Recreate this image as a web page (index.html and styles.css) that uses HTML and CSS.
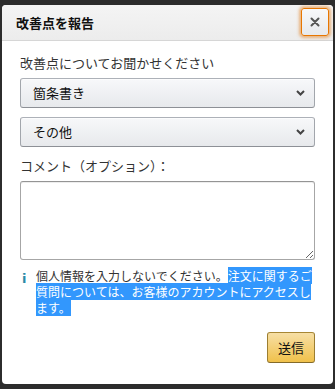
FILE: index.html
```html
<!DOCTYPE html>
<html lang="ja">
<head>
<meta charset="utf-8">
<link rel="stylesheet" href="styles.css">
</head>
<body>
<div class="modal">
  <div class="modal-header">
    <h1 class="modal-title">改善点を報告</h1>
    <button class="close-btn" aria-label="閉じる">
      <svg width="10" height="10" viewBox="0 0 10 10"><path d="M1.5 1.5 L8.5 8.5 M8.5 1.5 L1.5 8.5" stroke="#555" stroke-width="2" stroke-linecap="round" fill="none"/></svg>
    </button>
  </div>
  <div class="modal-body">
    <label class="field-label">改善点についてお聞かせください</label>
    <div class="select">
      <span class="select-text">箇条書き</span>
      <svg class="chev" width="9" height="6" viewBox="0 0 9 6"><path d="M1 1 L4.5 4.5 L8 1" stroke="#444" stroke-width="2" fill="none"/></svg>
    </div>
    <div class="select second">
      <span class="select-text">その他</span>
      <svg class="chev" width="9" height="6" viewBox="0 0 9 6"><path d="M1 1 L4.5 4.5 L8 1" stroke="#444" stroke-width="2" fill="none"/></svg>
    </div>
    <label class="field-label comment-label">コメント（オプション）：</label>
    <textarea class="comment"></textarea>
    <div class="info">
      <span class="info-icon">i</span>
      <p class="info-text">個人情報を入力しないでください。<span class="sel">注文に関するご</span><span class="sel">質問については、お客様のアカウントにアクセスし</span><span class="sel">ます。</span></p>
    </div>
    <div class="actions">
      <button class="submit">送信</button>
    </div>
  </div>
</div>
</body>
</html>
```
FILE: styles.css
```css
html, body {
  margin: 0;
  padding: 0;
}
body {
  background: #2c2c2c;
  font-family: "Noto Sans CJK JP", "Noto Sans", sans-serif;
  color: #333;
  padding: 5px 2px 5px 2px;
  height: 389px;
  box-sizing: border-box;
}
.modal {
  background: #fff;
  border-radius: 4px;
  height: 379px;
  overflow: hidden;
  box-sizing: border-box;
  display: flex;
  flex-direction: column;
}
.modal-header {
  height: 36px;
  box-sizing: border-box;
  background: linear-gradient(#f4f4f4, #ececec);
  border-bottom: 1px solid #d6d6d6;
  display: flex;
  align-items: center;
  justify-content: space-between;
  padding: 0 4px 0 14px;
}
.modal-title {
  margin: 0;
  font-size: 13px;
  font-weight: bold;
  color: #111;
  line-height: 18px;
}
.close-btn {
  width: 28px;
  height: 28px;
  margin-top: -1px;
  padding: 0;
  border: 1px solid #e77600;
  border-radius: 3px;
  background: linear-gradient(#f7f8fa, #e7e9ec);
  box-shadow: 0 0 3px 2px rgba(228, 121, 17, 0.5);
  display: flex;
  align-items: center;
  justify-content: center;
}
.modal-body {
  padding: 13px 18px 0 18px;
  display: flex;
  flex-direction: column;
}
.field-label {
  font-size: 13px;
  line-height: 18px;
  color: #333;
  margin-bottom: 6px;
}
.comment-label {
  margin-top: 10px;
}
.select {
  height: 30px;
  box-sizing: border-box;
  border: 1px solid #adb1b8;
  border-color: #adb1b8 #a2a6ac #8d9096;
  border-radius: 3px;
  background: linear-gradient(#f7f8fa, #e7e9ec);
  box-shadow: 0 1px 0 rgba(255, 255, 255, 0.6) inset;
  display: flex;
  align-items: center;
  justify-content: space-between;
  padding: 0 9px 0 12px;
}
.select.second {
  margin-top: 9px;
}
.select-text {
  font-size: 13px;
  color: #111;
  line-height: 18px;
}
.chev {
  display: block;
}
.comment {
  height: 79px;
  box-sizing: border-box;
  border: 1px solid #a6a6a6;
  border-top-color: #949494;
  border-radius: 3px;
  box-shadow: 0 1px 0 rgba(255, 255, 255, 0.5), 0 1px 0 rgba(0, 0, 0, 0.07) inset;
  resize: both;
  margin: 0;
  font-family: inherit;
}
.info {
  display: flex;
  margin-top: 8px;
}
.info-icon {
  width: 16px;
  flex: none;
  font-family: "DejaVu Sans", sans-serif;
  font-weight: bold;
  font-size: 13px;
  color: #2b8ba8;
  line-height: 16px;
  padding-left: 2px;
  padding-top: 3px;
  box-sizing: border-box;
}
.info-text {
  margin: 0;
  font-size: 12px;
  line-height: 16px;
  color: #333;
}
.sel {
  background: #3297fd;
  color: #fff;
}
.actions {
  display: flex;
  justify-content: flex-end;
  margin-top: 16px;
}
.submit {
  width: 48px;
  height: 31px;
  box-sizing: border-box;
  border: 1px solid #a88734;
  border-color: #a88734 #9c7e31 #846a29;
  border-radius: 3px;
  background: linear-gradient(#f7dfa5, #f0c14b);
  font-family: inherit;
  font-size: 13px;
  color: #111;
  padding: 0;
}
```
